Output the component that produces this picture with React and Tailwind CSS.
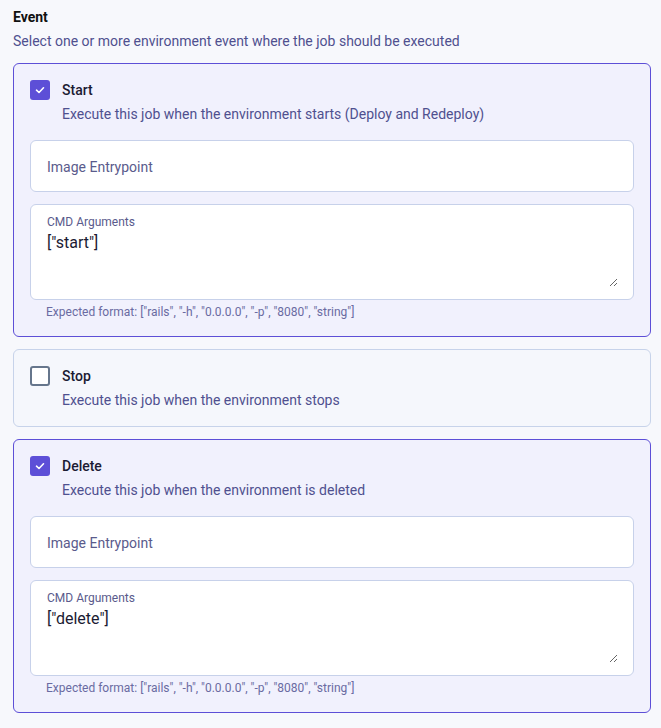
import React from "react";

function Check({ checked }) {
  if (checked) {
    return (
      <div className="w-5 h-5 shrink-0 rounded-[3px] bg-[#5d4fd7] flex items-center justify-center">
        <svg width="12" height="12" viewBox="0 0 12 12" fill="none">
          <path d="M2.5 6.2L5 8.5L9.5 3.8" stroke="white" strokeWidth="1.6" strokeLinecap="round" strokeLinejoin="round" />
        </svg>
      </div>
    );
  }
  return <div className="w-5 h-5 shrink-0 rounded-[3px] border-2 border-[#66768c] bg-white" />;
}

function Fields({ value }) {
  return (
    <div className="mt-4 flex flex-col">
      <div className="h-[52px] rounded-md border border-[#c7d1ea] bg-white flex items-center px-4 pt-[2px] text-[14px] text-[#5a5b8c]">
        Image Entrypoint
      </div>
      <div className="mt-3 h-[96px] rounded-md border border-[#c7d1ea] bg-white pl-4 pr-[15px] pt-[10px] pb-[12px] flex flex-col">
        <div className="text-[12px] leading-[14px] text-[#5a5b8c]">CMD Arguments</div>
        <textarea
          defaultValue={value}
          className="mt-[4px] flex-1 w-full resize-y bg-transparent outline-none text-[16px] leading-[20px] text-[#1b1b33] p-0 m-0 border-0"
          style={{ fontFamily: "Roboto, sans-serif" }}
        />
      </div>
      <div className="mt-[4px] pl-4 text-[12px] leading-[16px] text-[#6a6ba2]">
        Expected format: ["rails", "-h", "0.0.0.0", "-p", "8080", "string"]
      </div>
    </div>
  );
}

function Card({ checked, title, desc, value }) {
  return (
    <div
      className={
        "rounded-md border p-4 " +
        (checked ? "border-[#5d4fd7] bg-[#f1f1fd]" : "border-[#c7d3ea] bg-[#f5f7fc]")
      }
    >
      <div className="flex gap-3">
        <Check checked={checked} />
        <div className="flex flex-col">
          <div className="text-[14px] leading-[20px] font-medium text-[#1b1b33]">{title}</div>
          <div className="mt-1 text-[14px] leading-[20px] text-[#4f508f]">{desc}</div>
        </div>
      </div>
      {checked && <Fields value={value} />}
    </div>
  );
}

export default function App() {
  return (
    <div
      className="min-h-[728px] w-[661px] bg-[#f7f8fc] pl-[13px] pr-[10px] pt-[7px] pb-4"
      style={{ fontFamily: "Roboto, sans-serif" }}
    >
      <div className="text-[14px] leading-[20px] font-bold text-[#111111]">Event</div>
      <div className="mt-1 text-[14px] leading-[20px] text-[#4f508f]">
        Select one or more environment event where the job should be executed
      </div>
      <div className="mt-3 flex flex-col gap-3">
        <Card
          checked
          title="Start"
          desc="Execute this job when the environment starts (Deploy and Redeploy)"
          value={'["start"]'}
        />
        <Card checked={false} title="Stop" desc="Execute this job when the environment stops" />
        <Card
          checked
          title="Delete"
          desc="Execute this job when the environment is deleted"
          value={'["delete"]'}
        />
      </div>
    </div>
  );
}
